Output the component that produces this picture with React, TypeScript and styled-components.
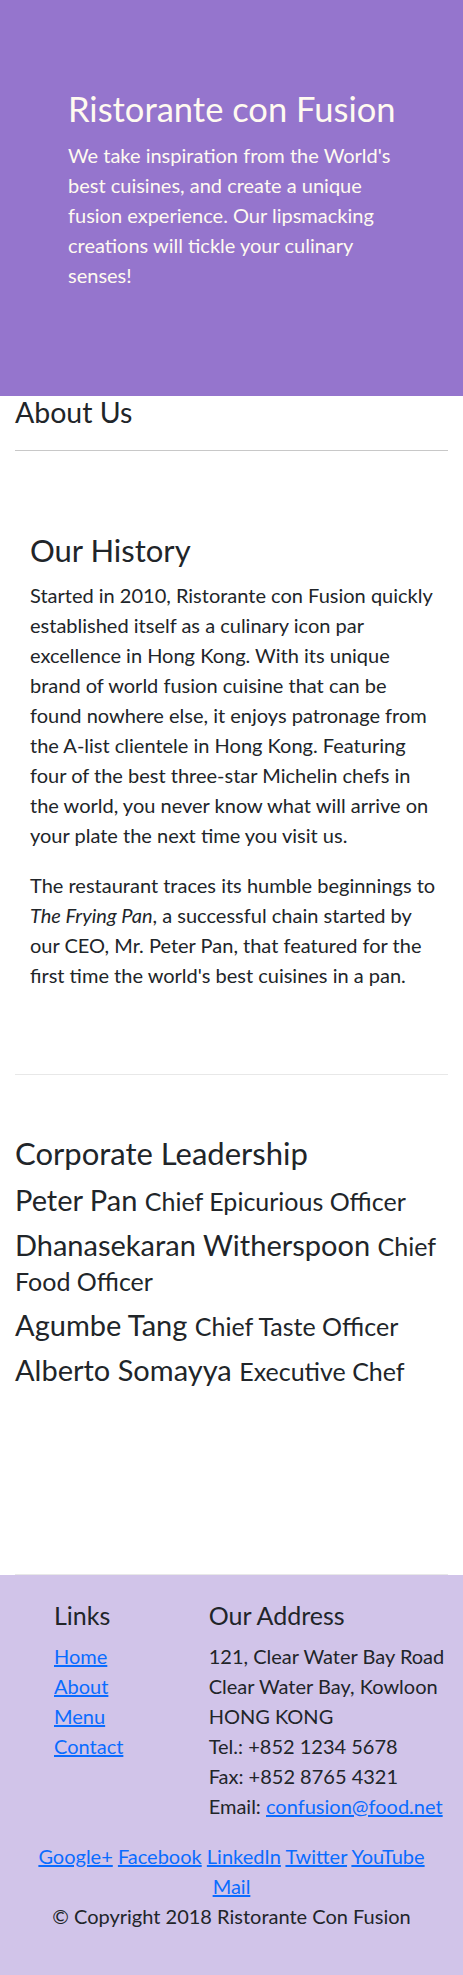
import React from "react";
import styled, { createGlobalStyle } from "styled-components";

const GlobalStyle = createGlobalStyle`
  *, *::before, *::after { box-sizing: border-box; }
  html, body { margin: 0; padding: 0; background: #ffffff; }
  body {
    font-family: Lato, "Open Sans", "Liberation Sans", sans-serif;
    font-size: 20px;
    line-height: 1.5;
    color: #212529;
  }
`;

const Hero = styled.header`
  background: #9575cd;
  color: #fffaf0;
  padding: 88px 20px 106px 68px;
`;

const HeroTitle = styled.h1`
  margin: 0 0 10px;
  font-size: 34.5px;
  font-weight: 400;
  line-height: 42px;
  white-space: nowrap;
`;

const HeroLead = styled.p`
  margin: 0;
  max-width: 328px;
  font-size: 20px;
  line-height: 30px;
`;

const Main = styled.main`
  padding: 0 15px;
`;

const PageTitle = styled.h3`
  margin: 0;
  font-size: 28.5px;
  font-weight: 400;
  line-height: 33.6px;
`;

const Rule = styled.hr`
  margin: 20px 0 0;
  border: 0;
  border-top: 1px solid #c8c8c8;
`;

const Section = styled.section<{
  $inset?: boolean;
  $top: number;
  $bottom: number;
  $minHeight?: number;
}>`
  padding: ${(p) => `${p.$top}px ${p.$inset ? 12 : 0}px ${p.$bottom}px ${p.$inset ? 15 : 0}px`};
  border-bottom: 1px solid #e8e8e8;
  min-height: ${(p) => (p.$minHeight ? `${p.$minHeight}px` : "0")};
`;

const SectionHeading = styled.h2`
  margin: 0 0 11px;
  font-size: 31px;
  font-weight: 400;
  line-height: 1.2;
`;

const Paragraph = styled.p`
  margin: 0 0 20px;
  line-height: 30px;
`;

const LeaderList = styled.ul`
  list-style: none;
  margin: 0 -12px 0 0;
  padding: 0;
`;

const Leader = styled.li`
  font-size: 29px;
  line-height: 34px;
  margin: 0 0 10px;
`;

const LeaderRole = styled.span`
  font-size: 25px;
`;

const Footer = styled.footer`
  background: #d1c4e9;
  padding: 25px 0 44px;
`;

const FooterColumns = styled.div`
  display: grid;
  grid-template-columns: 154.7px 1fr;
  padding-left: 54px;
  margin-bottom: 20px;
`;

const FooterHeading = styled.h5`
  margin: 0 0 11px;
  font-size: 25px;
  font-weight: 400;
  line-height: 1.2;
`;

const LinkList = styled.ul`
  list-style: none;
  margin: 0;
  padding: 0;
  line-height: 30px;
`;

const FooterLink = styled.a`
  color: #0a6cff;
  text-decoration: underline;
`;

const Address = styled.address`
  font-style: normal;
  line-height: 30px;
  margin: 0;
`;

const SocialRow = styled.div`
  text-align: center;
  padding: 0 30px;
  line-height: 30px;
`;

const Copyright = styled.p`
  margin: 0;
  text-align: center;
  line-height: 30px;
`;

const leaders = [
  { name: "Peter Pan", role: "Chief Epicurious Officer" },
  { name: "Dhanasekaran Witherspoon", role: "Chief Food Officer" },
  { name: "Agumbe Tang", role: "Chief Taste Officer" },
  { name: "Alberto Somayya", role: "Executive Chef" },
];

const navLinks = ["Home", "About", "Menu", "Contact"];
const social = ["Google+", "Facebook", "LinkedIn", "Twitter", "YouTube", "Mail"];

export default function App() {
  return (
    <>
      <GlobalStyle />
      <Hero>
        <HeroTitle>Ristorante con Fusion</HeroTitle>
        <HeroLead>
          We take inspiration from the World's best cuisines, and create a unique fusion
          experience. Our lipsmacking creations will tickle your culinary senses!
        </HeroLead>
      </Hero>
      <Main>
        <PageTitle>About Us</PageTitle>
        <Rule />
        <Section $inset $top={81} $bottom={64}>
          <SectionHeading>Our History</SectionHeading>
          <Paragraph>
            Started in 2010, Ristorante con Fusion quickly established itself as a culinary
            icon par excellence in Hong Kong. With its unique brand of world fusion cuisine
            that can be found nowhere else, it enjoys patronage from the A-list clientele in
            Hong Kong. Featuring four of the best three-star Michelin chefs in the world, you
            never know what will arrive on your plate the next time you visit us.
          </Paragraph>
          <Paragraph>
            The restaurant traces its humble beginnings to <em>The Frying Pan</em>, a
            successful chain started by our CEO, Mr. Peter Pan, that featured for the first
            time the world's best cuisines in a pan.
          </Paragraph>
        </Section>
        <Section $top={60} $bottom={0} $minHeight={500}>
          <SectionHeading>Corporate Leadership</SectionHeading>
          <LeaderList>
            {leaders.map((l) => (
              <Leader key={l.name}>
                {l.name} <LeaderRole>{l.role}</LeaderRole>
              </Leader>
            ))}
          </LeaderList>
        </Section>
      </Main>
      <Footer>
        <FooterColumns>
          <div>
            <FooterHeading>Links</FooterHeading>
            <LinkList>
              {navLinks.map((n) => (
                <li key={n}>
                  <FooterLink href="#">{n}</FooterLink>
                </li>
              ))}
            </LinkList>
          </div>
          <div>
            <FooterHeading>Our Address</FooterHeading>
            <Address>
              121, Clear Water Bay Road
              <br />
              Clear Water Bay, Kowloon
              <br />
              HONG KONG
              <br />
              Tel.: +852 1234 5678
              <br />
              Fax: +852 8765 4321
              <br />
              Email: <FooterLink href="#">confusion@food.net</FooterLink>
            </Address>
          </div>
        </FooterColumns>
        <SocialRow>
          {social.map((s, i) => (
            <React.Fragment key={s}>
              {i > 0 ? " " : null}
              <FooterLink href="#">{s}</FooterLink>
            </React.Fragment>
          ))}
        </SocialRow>
        <Copyright>© Copyright 2018 Ristorante Con Fusion</Copyright>
      </Footer>
    </>
  );
}
